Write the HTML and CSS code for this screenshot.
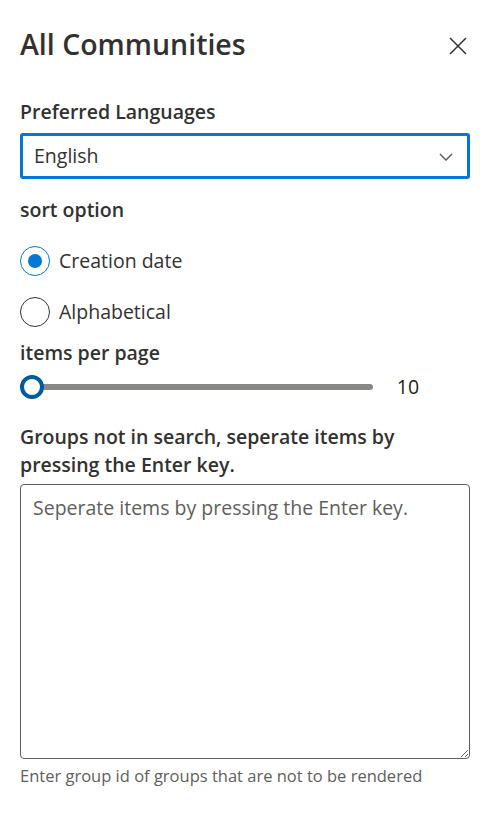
FILE: index.html
```html
<!DOCTYPE html>
<html lang="en">
<head>
<meta charset="utf-8">
<title>All Communities</title>
<link rel="stylesheet" href="styles.css">
</head>
<body>
<div class="panel">
  <div class="header">
    <h1 class="title">All Communities</h1>
    <button class="close" aria-label="Close">
      <svg width="18" height="18" viewBox="0 0 18 18"><path d="M1 1 L17 17 M17 1 L1 17" stroke="#323130" stroke-width="1.5" fill="none"/></svg>
    </button>
  </div>

  <label class="label first">Preferred Languages</label>
  <div class="dropdown">
    <span class="dd-text">English</span>
    <svg class="chev" width="14" height="8" viewBox="0 0 14 8"><path d="M1 1 L7 7 L13 1" stroke="#605e5c" stroke-width="1.5" fill="none"/></svg>
  </div>

  <div class="label sort">sort option</div>
  <div class="radios">
    <div class="radio checked"><span class="circle"></span><span class="rtext">Creation date</span></div>
    <div class="radio"><span class="circle"></span><span class="rtext">Alphabetical</span></div>
  </div>

  <div class="label items">items per page</div>
  <div class="slider-row">
    <div class="slider">
      <div class="track"></div>
      <span class="thumb"></span>
    </div>
    <span class="value">10</span>
  </div>

  <div class="label groups">Groups not in search, seperate items by pressing the Enter key.</div>
  <textarea class="area" placeholder="Seperate items by pressing the Enter key."></textarea>
  <div class="help">Enter group id of groups that are not to be rendered</div>
</div>
</body>
</html>
```
FILE: styles.css
```css
* { box-sizing: border-box; }
html, body { margin: 0; padding: 0; background: #fff; }
body {
  font-family: "Open Sans", "Noto Sans", sans-serif;
  color: #323130;
  width: 492px;
}
.panel {
  padding: 24px 22px 0 20px;
  display: flex;
  flex-direction: column;
}
.header {
  display: flex;
  justify-content: space-between;
  align-items: center;
  height: 40px;
}
.title {
  margin: 0;
  font-size: 28.5px;
  line-height: 40px;
  font-weight: 600;
}
.close {
  border: 0;
  background: none;
  padding: 0;
  margin: 4px 3px 0 0;
  width: 18px;
  height: 18px;
  display: flex;
}
.label {
  font-size: 19.5px;
  line-height: 28px;
  font-weight: 600;
  display: block;
}
.label.first { margin-top: 34px; }
.dropdown {
  margin-top: 7px;
  height: 46px;
  border: 3px solid #0078d4;
  border-radius: 3px;
  display: flex;
  align-items: center;
  justify-content: space-between;
  padding: 0 14px 0 11px;
}
.dd-text { font-size: 19.5px; line-height: 28px; }
.chev { margin-top: 1px; }
.label.sort { margin-top: 17px; }
.radios {
  display: flex;
  flex-direction: column;
  gap: 21px;
  margin-top: 22px;
}
.radio {
  display: flex;
  align-items: center;
  height: 30px;
  gap: 9px;
}
.circle {
  width: 30px;
  height: 30px;
  border-radius: 50%;
  border: 1.5px solid #323130;
  display: flex;
  align-items: center;
  justify-content: center;
}
.radio.checked .circle { border-color: #0078d4; }
.radio.checked .circle::after {
  content: "";
  width: 14px;
  height: 14px;
  border-radius: 50%;
  background: #0078d4;
}
.rtext { font-size: 19.5px; line-height: 28px; }
.label.items { margin-top: 12px; }
.slider-row {
  display: flex;
  align-items: center;
  height: 24px;
  margin-top: 8px;
}
.slider {
  position: relative;
  width: 353px;
  height: 24px;
  display: flex;
  align-items: center;
}
.track {
  margin-left: 12px;
  flex: 1;
  height: 6px;
  border-radius: 3px;
  background: #8a8886;
}
.thumb {
  position: absolute;
  left: 0;
  top: 0;
  width: 24px;
  height: 24px;
  border-radius: 50%;
  border: 4px solid #005a9e;
  background: #fff;
}
.value {
  width: 60px;
  margin-left: 5px;
  text-align: center;
  font-size: 19.5px;
  line-height: 24px;
  color: #201f1e;
}
.label.groups { margin-top: 24px; }
.area {
  margin-top: 5px;
  height: 275px;
  width: 100%;
  border: 1.5px solid #605e5c;
  border-radius: 4px;
  padding: 9px 12px;
  font-family: "Open Sans", "Noto Sans", sans-serif;
  font-size: 19.5px;
  line-height: 28px;
  color: #323130;
  resize: vertical;
  outline: none;
}
.area::placeholder { color: #605e5c; }
.help {
  margin-top: 5px;
  font-size: 16.5px;
  line-height: 24px;
  color: #605e5c;
}
```
